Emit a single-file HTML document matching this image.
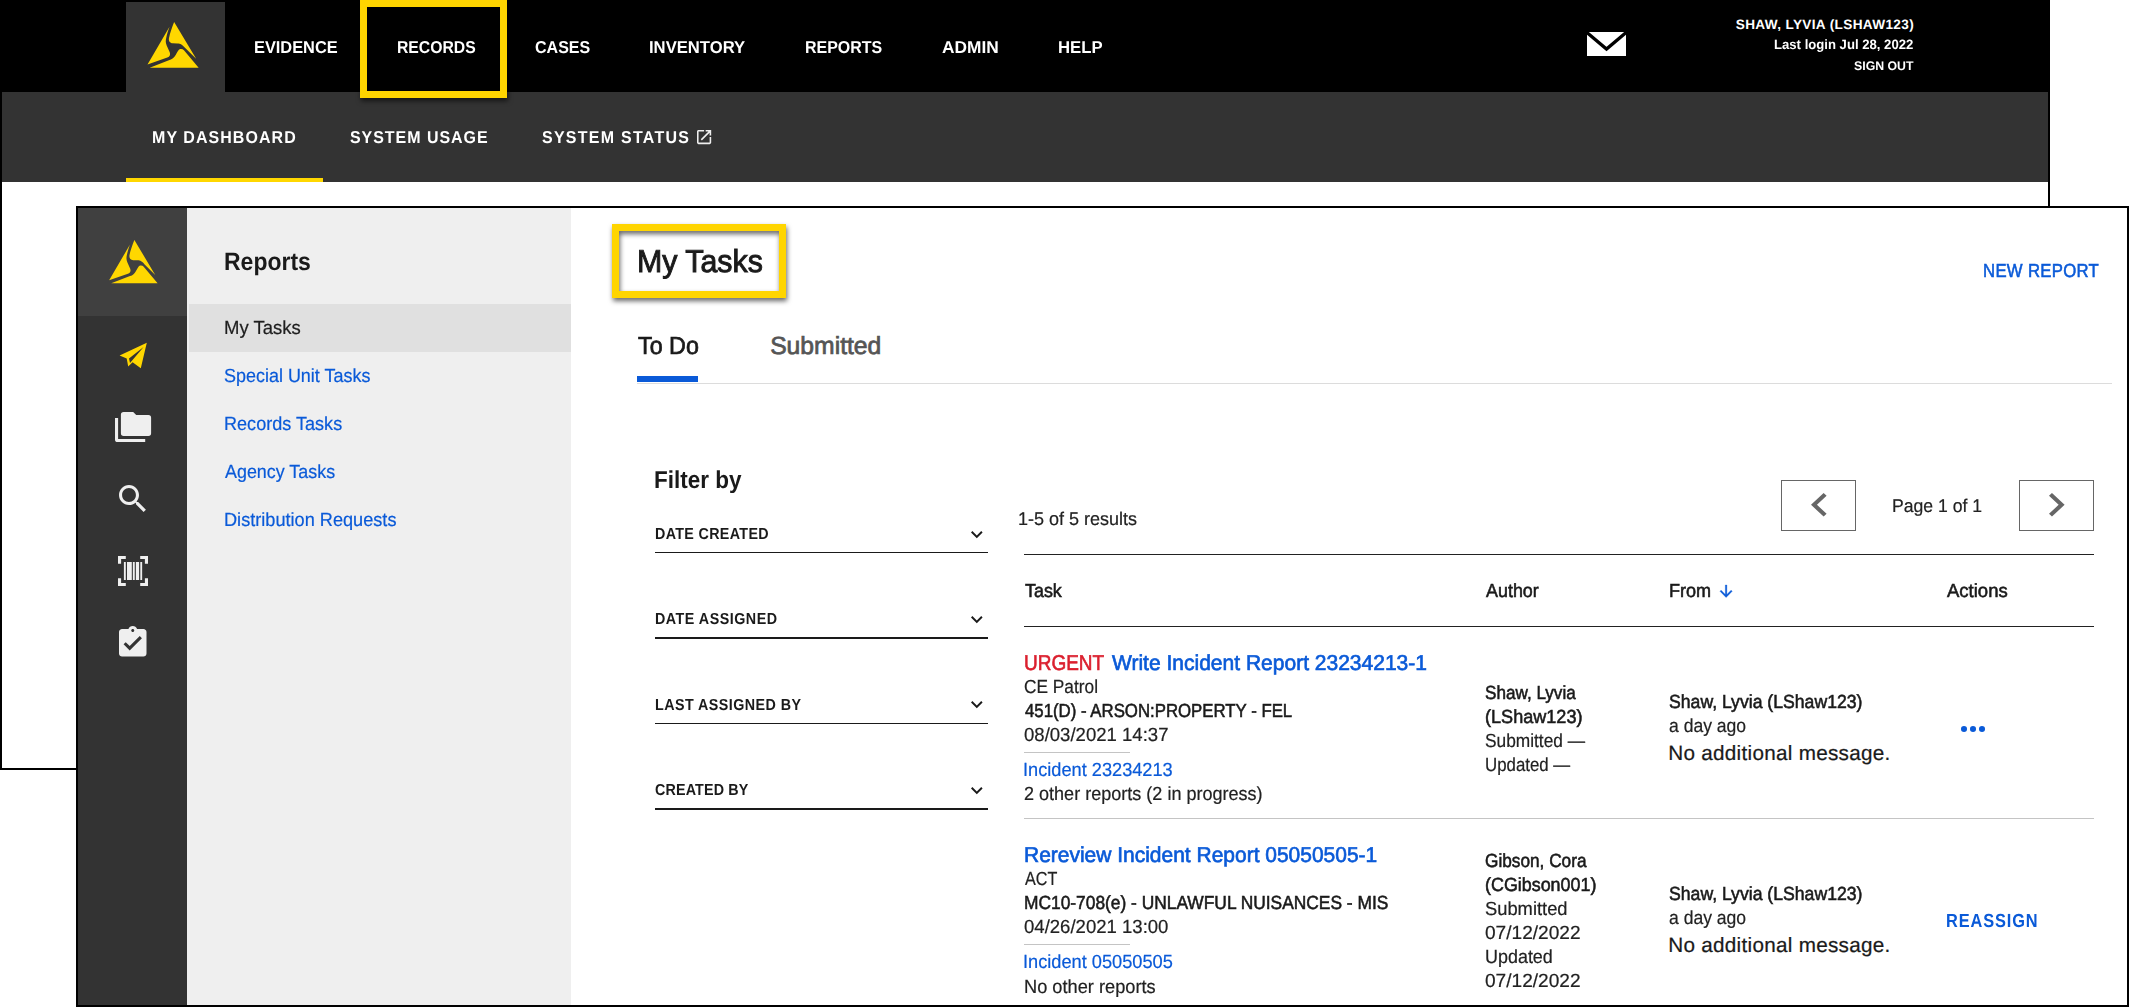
<!DOCTYPE html>
<html lang="en">
<head>
<meta charset="utf-8">
<title>My Tasks - Reports</title>
<style>
html,body{margin:0;padding:0;background:#fff;}
body{width:2129px;height:1007px;position:relative;overflow:hidden;font-family:"Liberation Sans",Arial,sans-serif;}
.a{position:absolute;display:block;}
.t{position:absolute;white-space:nowrap;line-height:1;transform-origin:0 0;display:block;text-rendering:geometricPrecision;}
svg{position:absolute;display:block;overflow:visible;}
.hl{position:absolute;box-sizing:border-box;border:7px solid #ffd500;filter:drop-shadow(1px 3px 2.5px rgba(0,0,0,.6));}
.ln{position:absolute;height:0;}
</style>
</head>
<body>

<!-- ================= window 1 : Evidence.com header ================= -->
<section id="win1">
  <div class="a" style="left:0;top:0;width:2050px;height:770px;box-sizing:border-box;border:2px solid #000;border-top:0;background:#fff;"></div>
  <header>
    <div class="a" style="left:0;top:0;width:2050px;height:92px;background:#000;"></div>
    <div class="a" style="left:126px;top:2px;width:99px;height:90px;background:#333;"></div>
    <svg style="left:147px;top:21.5px" width="52" height="45.8" viewBox="183 198 699 624"><g fill="#ffd700"><path d="M548,198 L848,700 L692,545 C655,505 640,492 590,490 L530,488 C490,486 470,455 478,415 C490,350 520,270 548,198 Z"/><path d="M485,262 L185,778 L455,682 C490,668 500,645 488,610 L448,520 C430,480 432,450 440,415 C450,365 470,300 485,262 Z"/><path d="M215,820 L882,820 L682,582 C660,560 625,558 605,585 C590,605 575,640 555,668 C535,697 510,708 485,717 Z"/></g></svg>
    <nav>
<span class="t" style="left:254.07px;top:38.73px;font-size:17.2px;color:#fff;font-weight:700;transform:scaleX(0.9518);">EVIDENCE</span>
<span class="t" style="left:397.10px;top:38.66px;font-size:17.2px;color:#fff;font-weight:700;transform:scaleX(0.9156);">RECORDS</span>
<span class="t" style="left:534.94px;top:38.63px;font-size:17.2px;color:#fff;font-weight:700;transform:scaleX(0.9322);">CASES</span>
<span class="t" style="left:648.54px;top:38.69px;font-size:17.2px;color:#fff;font-weight:700;transform:scaleX(0.9681);">INVENTORY</span>
<span class="t" style="left:804.99px;top:38.65px;font-size:17.2px;color:#fff;font-weight:700;transform:scaleX(0.9296);">REPORTS</span>
<span class="t" style="left:942.34px;top:39.19px;font-size:17.2px;color:#fff;font-weight:700;transform:scaleX(1.0068);">ADMIN</span>
<span class="t" style="left:1058.02px;top:39.02px;font-size:17.2px;color:#fff;font-weight:700;transform:scaleX(0.9731);">HELP</span>
    </nav>
    <svg style="left:1587px;top:32px" width="39" height="24" viewBox="0 0 39 24"><rect width="39" height="24" fill="#fff"/><path d="M-1,-0.3 L19.5,17 L40,-0.3" fill="none" stroke="#000" stroke-width="3.3"/></svg>
<span class="t" style="left:1735.76px;top:18.42px;font-size:13.6px;color:#fff;font-weight:700;letter-spacing:0.357px;">SHAW, LYVIA (LSHAW123)</span>
<span class="t" style="left:1774.12px;top:38.44px;font-size:13.6px;color:#fff;font-weight:700;transform:scaleX(0.9654);">Last login Jul 28, 2022</span>
<span class="t" style="left:1854.08px;top:59.79px;font-size:12.5px;color:#fff;font-weight:700;transform:scaleX(0.9855);">SIGN OUT</span>
  </header>
  <nav id="subnav">
    <div class="a" style="left:2px;top:92px;width:2046px;height:90px;background:#333;"></div>
    <div class="a" style="left:126px;top:178px;width:197px;height:4px;background:#ffd700;"></div>
<span class="t" style="left:152.09px;top:128.66px;font-size:17.2px;color:#fff;font-weight:700;letter-spacing:1.145px;transform:scaleX(0.9300);">MY DASHBOARD</span>
<span class="t" style="left:349.72px;top:128.56px;font-size:17.2px;color:#fff;font-weight:700;letter-spacing:1.035px;transform:scaleX(0.9300);">SYSTEM USAGE</span>
<span class="t" style="left:541.72px;top:128.64px;font-size:17.2px;color:#fff;font-weight:700;letter-spacing:1.366px;transform:scaleX(0.9300);">SYSTEM STATUS</span>
    <svg style="left:696.8px;top:130px" width="14.2" height="14.2" viewBox="3 3 18 18"><path fill="#eee" d="M19 19H5V5h7V3H5c-1.11 0-2 .9-2 2v14c0 1.1.89 2 2 2h14c1.1 0 2-.9 2-2v-7h-2v7zM14 3v2h3.59l-9.83 9.83 1.41 1.41L19 6.41V10h2V3h-7z"/></svg>
  </nav>
  <div class="hl" style="left:360px;top:0;width:147px;height:98px;"></div>
</section>

<!-- ================= window 2 : Records / Reports ================= -->
<section id="win2">
  <div class="a" style="left:76px;top:206px;width:2053px;height:801px;box-sizing:border-box;border:2px solid #000;background:#fff;"></div>
  <aside id="rail">
    <div class="a" style="left:78px;top:208px;width:109px;height:797px;background:#333;"></div>
    <div class="a" style="left:78px;top:208px;width:109px;height:108px;background:#404040;"></div>
    <svg style="left:108.7px;top:239.8px" width="48.6" height="43.4" viewBox="183 198 699 624"><g fill="#ffd700"><path d="M548,198 L848,700 L692,545 C655,505 640,492 590,490 L530,488 C490,486 470,455 478,415 C490,350 520,270 548,198 Z"/><path d="M485,262 L185,778 L455,682 C490,668 500,645 488,610 L448,520 C430,480 432,450 440,415 C450,365 470,300 485,262 Z"/><path d="M215,820 L882,820 L682,582 C660,560 625,558 605,585 C590,605 575,640 555,668 C535,697 510,708 485,717 Z"/></g></svg>
    <!-- paper plane -->
    <svg style="left:0;top:0" width="200" height="700" viewBox="0 0 200 700"><path fill="#ffd700" fill-rule="evenodd" d="M146.8 342.8 L119.6 355.4 L126.7 358.6 L128.2 366.4 L132.6 362.2 L140.8 368.3 Z M129.0 358.5 L143.6 347.0 L130.0 362.9 Z"/>
    <!-- folders -->
    <path fill="#efefef" d="M123.6 411.9 H133.2 L136.2 414.9 H148.4 A2.7 2.7 0 0 1 151.1 417.6 V433.2 A2.7 2.7 0 0 1 148.4 435.9 H123.6 A2.7 2.7 0 0 1 120.9 433.2 V414.6 A2.7 2.7 0 0 1 123.6 411.9 Z"/>
    <path fill="#efefef" d="M115 418 H118.1 V438.9 H145.2 V442 H117.6 A2.6 2.6 0 0 1 115 439.4 Z"/>
    <!-- barcode -->
    <g fill="#efefef"><path d="M118 556 h7.8 v3.1 h-4.7 v4.7 h-3.1z M148 556 h-7.8 v3.1 h4.7 v4.7 h3.1z M118 586 h7.8 v-3.1 h-4.7 v-4.7 h-3.1z M148 586 h-7.8 v-3.1 h4.7 v-4.7 h3.1z"/>
    <rect x="123.9" y="562" width="1.9" height="18"/><rect x="127" y="562" width="4.8" height="18"/><rect x="132.85" y="562" width="1.9" height="18"/><rect x="135.85" y="562" width="3.25" height="18"/><rect x="140.3" y="562" width="1.85" height="18"/></g>
    </svg>
    <!-- search -->
    <svg style="left:119.2px;top:485.3px" width="26.9" height="27" viewBox="3 3 17.49 17.49" preserveAspectRatio="none"><path fill="#efefef" d="M15.5 14h-.79l-.28-.27C15.41 12.59 16 11.11 16 9.5 16 5.91 13.09 3 9.5 3S3 5.91 3 9.5 5.91 16 9.5 16c1.61 0 3.09-.59 4.23-1.57l.27.28v.79l5 4.99L20.49 19l-4.99-5zm-6 0C7.01 14 5 11.99 5 9.5S7.01 5 9.5 5 14 7.01 14 9.5 11.99 14 9.5 14z"/></svg>
    <!-- clipboard check -->
    <svg style="left:119.2px;top:626.3px" width="27.5" height="30.5" viewBox="3 1 18 20" preserveAspectRatio="none"><path fill="#efefef" d="M19 3h-4.18C14.4 1.84 13.3 1 12 1c-1.3 0-2.4.84-2.82 2H5c-1.1 0-2 .9-2 2v14c0 1.1.9 2 2 2h14c1.1 0 2-.9 2-2V5c0-1.1-.9-2-2-2zm-7 0c.55 0 1 .45 1 1s-.45 1-1 1-1-.45-1-1 .45-1 1-1zm-2 14l-4-4 1.41-1.41L10 14.17l6.59-6.59L18 9l-8 8z"/></svg>
  </aside>
  <aside id="sidepanel">
    <div class="a" style="left:187px;top:208px;width:384px;height:797px;background:#efefef;"></div>
    <div class="a" style="left:189px;top:304px;width:382px;height:48px;background:#e0e0e0;"></div>
<span class="t" style="left:224.12px;top:250.31px;font-size:25px;color:#1a1a1a;font-weight:700;transform:scaleX(0.9193);">Reports</span>
<span class="t" style="left:224.12px;top:319.28px;font-size:19px;color:#1e1e1e;-webkit-text-stroke:0.21px #1e1e1e;transform:scaleX(0.9745);">My Tasks</span>
<span class="t" style="left:224.32px;top:367.18px;font-size:19px;color:#0a5ad8;-webkit-text-stroke:0.21px #0a5ad8;transform:scaleX(0.9450);">Special Unit Tasks</span>
<span class="t" style="left:223.85px;top:415.41px;font-size:19px;color:#0a5ad8;-webkit-text-stroke:0.21px #0a5ad8;transform:scaleX(0.9512);">Records Tasks</span>
<span class="t" style="left:225.00px;top:463.29px;font-size:19px;color:#0a5ad8;-webkit-text-stroke:0.21px #0a5ad8;transform:scaleX(0.9420);">Agency Tasks</span>
<span class="t" style="left:223.82px;top:511.48px;font-size:19px;color:#0a5ad8;-webkit-text-stroke:0.21px #0a5ad8;transform:scaleX(0.9550);">Distribution Requests</span>
  </aside>
  <main>
    <div class="hl" style="left:612px;top:224px;width:174px;height:74px;"></div>
<span class="t" style="left:637.09px;top:245.78px;font-size:31.8px;color:#1a1a1a;-webkit-text-stroke:0.95px #1a1a1a;transform:scaleX(0.9538);">My Tasks</span>
<span class="t" style="left:1983.42px;top:261.76px;font-size:19px;color:#0a5ad8;-webkit-text-stroke:0.57px #0a5ad8;letter-spacing:0.354px;transform:scaleX(0.8800);">NEW REPORT</span>
<span class="t" style="left:637.83px;top:334.87px;font-size:24.7px;color:#1a1a1a;-webkit-text-stroke:0.74px #1a1a1a;transform:scaleX(0.9436);">To Do</span>
<span class="t" style="left:770.17px;top:334.89px;font-size:24.7px;color:#555;-webkit-text-stroke:0.74px #555;">Submitted</span>
<span class="t" style="left:1018.27px;top:509.83px;font-size:18.4px;color:#222;-webkit-text-stroke:0.20px #222;transform:scaleX(0.9788);">1-5 of 5 results</span>
<span class="t" style="left:1891.98px;top:497.29px;font-size:18.4px;color:#222;-webkit-text-stroke:0.20px #222;transform:scaleX(0.9573);">Page 1 of 1</span>
    <div class="a" style="left:637px;top:376px;width:61px;height:6px;background:#0a5ad8;"></div>
    <div class="a" style="left:637px;top:383px;width:1475px;height:1px;background:#dcdcdc;"></div>
    <section id="filters">
<span class="t" style="left:654.12px;top:469.05px;font-size:24.5px;color:#1a1a1a;font-weight:700;transform:scaleX(0.9185);">Filter by</span>
<span class="t" style="left:655.12px;top:526.71px;font-size:15.9px;color:#1a1a1a;font-weight:700;letter-spacing:0.377px;transform:scaleX(0.9000);">DATE CREATED</span>
<span class="t" style="left:655.12px;top:611.58px;font-size:15.9px;color:#1a1a1a;font-weight:700;letter-spacing:0.554px;transform:scaleX(0.9000);">DATE ASSIGNED</span>
<span class="t" style="left:655.12px;top:697.58px;font-size:15.9px;color:#1a1a1a;font-weight:700;letter-spacing:0.490px;transform:scaleX(0.9000);">LAST ASSIGNED BY</span>
<span class="t" style="left:655.07px;top:782.67px;font-size:15.9px;color:#1a1a1a;font-weight:700;letter-spacing:0.182px;transform:scaleX(0.9000);">CREATED BY</span>
      <div class="a" style="left:655px;top:551.7px;width:333px;height:1.6px;background:#1a1a1a;"></div>
      <div class="a" style="left:655px;top:636.7px;width:333px;height:2.2px;background:#1a1a1a;"></div>
      <div class="a" style="left:655px;top:722.7px;width:333px;height:1.6px;background:#1a1a1a;"></div>
      <div class="a" style="left:655px;top:807.7px;width:333px;height:2.2px;background:#1a1a1a;"></div>
      <svg style="left:970.5px;top:530.6px" width="11.6" height="7.3" viewBox="6 8.59 12 7.41" preserveAspectRatio="none"><path fill="#1a1a1a" d="M16.59 8.59L12 13.17 7.41 8.59 6 10l6 6 6-6z"/></svg>
      <svg style="left:970.5px;top:615.9px" width="11.6" height="7.3" viewBox="6 8.59 12 7.41" preserveAspectRatio="none"><path fill="#1a1a1a" d="M16.59 8.59L12 13.17 7.41 8.59 6 10l6 6 6-6z"/></svg>
      <svg style="left:970.5px;top:701.3px" width="11.6" height="7.3" viewBox="6 8.59 12 7.41" preserveAspectRatio="none"><path fill="#1a1a1a" d="M16.59 8.59L12 13.17 7.41 8.59 6 10l6 6 6-6z"/></svg>
      <svg style="left:970.5px;top:786.6px" width="11.6" height="7.3" viewBox="6 8.59 12 7.41" preserveAspectRatio="none"><path fill="#1a1a1a" d="M16.59 8.59L12 13.17 7.41 8.59 6 10l6 6 6-6z"/></svg>
    </section>
    <section id="pager">
      <div class="a" style="left:1781px;top:480px;width:75px;height:51px;box-sizing:border-box;border:1px solid #666;"></div>
      <div class="a" style="left:2019px;top:480px;width:75px;height:51px;box-sizing:border-box;border:1px solid #666;"></div>
      <svg style="left:1811px;top:493.4px" width="15.6" height="23.6" viewBox="8 6 7.41 12" preserveAspectRatio="none"><path fill="#666" d="M15.41 7.41L14 6l-6 6 6 6 1.41-1.41L10.83 12z"/></svg>
      <svg style="left:2048.8px;top:493.4px" width="15.6" height="23.6" viewBox="8.59 6 7.41 12" preserveAspectRatio="none"><path fill="#666" d="M10 6L8.59 7.41 13.17 12l-4.58 4.59L10 18l6-6z"/></svg>
    </section>
    <section id="tasks">
      <div class="a" style="left:1024px;top:553.5px;width:1070px;height:1.2px;background:#222;"></div>
<span class="t" style="left:1024.70px;top:581.92px;font-size:19px;color:#1a1a1a;-webkit-text-stroke:0.57px #1a1a1a;transform:scaleX(0.9425);">Task</span>
<span class="t" style="left:1486.02px;top:581.87px;font-size:19px;color:#1a1a1a;-webkit-text-stroke:0.57px #1a1a1a;transform:scaleX(0.9428);">Author</span>
<span class="t" style="left:1669.13px;top:582.04px;font-size:19px;color:#1a1a1a;-webkit-text-stroke:0.57px #1a1a1a;transform:scaleX(0.9500);">From</span>
<span class="t" style="left:1947.06px;top:581.85px;font-size:19px;color:#1a1a1a;-webkit-text-stroke:0.57px #1a1a1a;transform:scaleX(0.9744);">Actions</span>
      <svg style="left:1719.8px;top:585px" width="12.2" height="12.5" viewBox="4 4 16 16" preserveAspectRatio="none"><path fill="#0a5ad8" stroke="#0a5ad8" stroke-width="0.45" d="M20 12l-1.41-1.41L13 16.17V4h-2v12.17l-5.58-5.59L4 12l8 8 8-8z"/></svg>
      <div class="a" style="left:1024px;top:625.6px;width:1070px;height:1.2px;background:#222;"></div>
      <article id="row1">
<span class="t" style="left:1024.07px;top:652.88px;font-size:21.5px;color:#db1f2e;-webkit-text-stroke:0.65px #db1f2e;transform:scaleX(0.8819);">URGENT</span>
<span class="t" style="left:1111.90px;top:652.83px;font-size:21.5px;color:#0a5ad8;-webkit-text-stroke:0.65px #0a5ad8;transform:scaleX(0.9773);">Write Incident Report 23234213-1</span>
<span class="t" style="left:1023.82px;top:678.31px;font-size:19px;color:#222;-webkit-text-stroke:0.21px #222;transform:scaleX(0.9103);">CE Patrol</span>
<span class="t" style="left:1024.65px;top:702.18px;font-size:19px;color:#1a1a1a;-webkit-text-stroke:0.57px #1a1a1a;transform:scaleX(0.8838);">451(D) - ARSON:PROPERTY - FEL</span>
<span class="t" style="left:1024.01px;top:726.28px;font-size:19px;color:#222;-webkit-text-stroke:0.21px #222;transform:scaleX(0.9768);">08/03/2021 14:37</span>
<span class="t" style="left:1023.45px;top:761.40px;font-size:19px;color:#0a5ad8;-webkit-text-stroke:0.21px #0a5ad8;transform:scaleX(0.9575);">Incident 23234213</span>
<span class="t" style="left:1023.82px;top:785.44px;font-size:19px;color:#222;-webkit-text-stroke:0.21px #222;transform:scaleX(0.9494);">2 other reports (2 in progress)</span>
<span class="t" style="left:1485.14px;top:684.40px;font-size:19px;color:#1a1a1a;-webkit-text-stroke:0.57px #1a1a1a;transform:scaleX(0.9011);">Shaw, Lyvia</span>
<span class="t" style="left:1484.67px;top:707.68px;font-size:19px;color:#1a1a1a;-webkit-text-stroke:0.57px #1a1a1a;transform:scaleX(0.9514);">(LShaw123)</span>
<span class="t" style="left:1484.82px;top:731.85px;font-size:19px;color:#222;-webkit-text-stroke:0.21px #222;transform:scaleX(0.9107);">Submitted —</span>
<span class="t" style="left:1484.68px;top:756.44px;font-size:19px;color:#222;-webkit-text-stroke:0.21px #222;transform:scaleX(0.8861);">Updated —</span>
<span class="t" style="left:1669.02px;top:692.70px;font-size:19px;color:#1a1a1a;-webkit-text-stroke:0.57px #1a1a1a;transform:scaleX(0.9282);">Shaw, Lyvia (LShaw123)</span>
<span class="t" style="left:1669.35px;top:716.94px;font-size:19px;color:#222;-webkit-text-stroke:0.21px #222;transform:scaleX(0.9241);">a day ago</span>
<span class="t" style="left:1668.24px;top:744.03px;font-size:20.7px;color:#1a1a1a;-webkit-text-stroke:0.23px #1a1a1a;letter-spacing:0.280px;">No additional message.</span>
        <div class="a" style="left:1024px;top:752px;width:106px;height:1px;background:#c4c4c4;"></div>
        <svg style="left:1955px;top:720px" width="36" height="18" viewBox="1955 720 36 18"><g fill="#0a5ad8"><circle cx="1964" cy="729" r="3.05"/><circle cx="1973" cy="729" r="3.05"/><circle cx="1982" cy="729" r="3.05"/></g></svg>
        <div class="a" style="left:1024px;top:817.8px;width:1070px;height:1px;background:#c4c4c4;"></div>
      </article>
      <article id="row2">
<span class="t" style="left:1023.70px;top:844.83px;font-size:21.5px;color:#0a5ad8;-webkit-text-stroke:0.65px #0a5ad8;transform:scaleX(0.9754);">Rereview Incident Report 05050505-1</span>
<span class="t" style="left:1025.13px;top:870.23px;font-size:19px;color:#222;-webkit-text-stroke:0.21px #222;transform:scaleX(0.8495);">ACT</span>
<span class="t" style="left:1023.66px;top:894.18px;font-size:19px;color:#1a1a1a;-webkit-text-stroke:0.57px #1a1a1a;transform:scaleX(0.9137);">MC10-708(e) - UNLAWFUL NUISANCES - MIS</span>
<span class="t" style="left:1024.02px;top:918.28px;font-size:19px;color:#222;-webkit-text-stroke:0.21px #222;transform:scaleX(0.9763);">04/26/2021 13:00</span>
<span class="t" style="left:1023.45px;top:953.40px;font-size:19px;color:#0a5ad8;-webkit-text-stroke:0.21px #0a5ad8;transform:scaleX(0.9578);">Incident 05050505</span>
<span class="t" style="left:1024.20px;top:978.49px;font-size:19px;color:#222;-webkit-text-stroke:0.21px #222;transform:scaleX(0.9590);">No other reports</span>
<span class="t" style="left:1485.35px;top:851.51px;font-size:19px;color:#1a1a1a;-webkit-text-stroke:0.57px #1a1a1a;transform:scaleX(0.9070);">Gibson, Cora</span>
<span class="t" style="left:1484.99px;top:875.68px;font-size:19px;color:#1a1a1a;-webkit-text-stroke:0.57px #1a1a1a;transform:scaleX(0.9415);">(CGibson001)</span>
<span class="t" style="left:1484.66px;top:899.87px;font-size:19px;color:#222;-webkit-text-stroke:0.21px #222;transform:scaleX(0.9650);">Submitted</span>
<span class="t" style="left:1485.21px;top:923.84px;font-size:19px;color:#222;-webkit-text-stroke:0.21px #222;transform:scaleX(1.0050);">07/12/2022</span>
<span class="t" style="left:1484.81px;top:948.09px;font-size:19px;color:#222;-webkit-text-stroke:0.21px #222;transform:scaleX(0.9442);">Updated</span>
<span class="t" style="left:1485.21px;top:971.84px;font-size:19px;color:#222;-webkit-text-stroke:0.21px #222;transform:scaleX(1.0050);">07/12/2022</span>
<span class="t" style="left:1669.02px;top:884.70px;font-size:19px;color:#1a1a1a;-webkit-text-stroke:0.57px #1a1a1a;transform:scaleX(0.9282);">Shaw, Lyvia (LShaw123)</span>
<span class="t" style="left:1669.35px;top:908.94px;font-size:19px;color:#222;-webkit-text-stroke:0.21px #222;transform:scaleX(0.9241);">a day ago</span>
<span class="t" style="left:1668.24px;top:936.03px;font-size:20.7px;color:#1a1a1a;-webkit-text-stroke:0.23px #1a1a1a;letter-spacing:0.280px;">No additional message.</span>
<span class="t" style="left:1946.10px;top:911.75px;font-size:19px;color:#0a5ad8;font-weight:700;letter-spacing:1.029px;transform:scaleX(0.8600);">REASSIGN</span>
        <div class="a" style="left:1024px;top:944px;width:106px;height:1px;background:#c4c4c4;"></div>
      </article>
    </section>
  </main>
</section>
</body>
</html>
